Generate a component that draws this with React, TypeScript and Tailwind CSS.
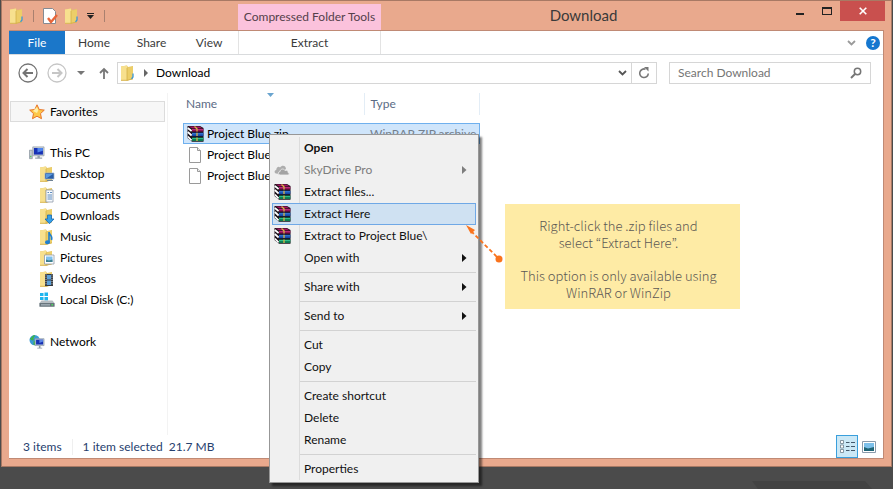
import type { ReactNode } from 'react';

const links = [
  { label: 'Desktop', icon: 'desktop' },
  { label: 'Documents', icon: 'documents' },
  { label: 'Downloads', icon: 'downloads' },
  { label: 'Music', icon: 'music' },
  { label: 'Pictures', icon: 'pictures' },
  { label: 'Videos', icon: 'videos' },
];

type MenuEntry = {
  label: string;
  icon?: ReactNode;
  arrow?: boolean;
  bold?: boolean;
  disabled?: boolean;
  active?: boolean;
};

const menuGroups: MenuEntry[][] = [
  [
    { label: 'Open', bold: true },
    { label: 'SkyDrive Pro', icon: <CloudIcon />, arrow: true, disabled: true },
    { label: 'Extract files...', icon: <BooksIcon /> },
    { label: 'Extract Here', icon: <BooksIcon />, active: true },
    { label: 'Extract to Project Blue\\', icon: <BooksIcon /> },
    { label: 'Open with', arrow: true },
  ],
  [{ label: 'Share with', arrow: true }],
  [{ label: 'Send to', arrow: true }],
  [{ label: 'Cut' }, { label: 'Copy' }],
  [{ label: 'Create shortcut' }, { label: 'Delete' }, { label: 'Rename' }],
  [{ label: 'Properties' }],
];

/* Icons */
function FolderIcon({ kind }: { kind?: string }) {
  return (
    <svg width="16" height="16" viewBox="0 0 16 16" className="shrink-0">
      <path d="M1 1.500L7 .5l1 1.500 5-1V14l-5 1.500H1z" fill="#e5c566" />
      <path d="M1 1.500L7 .5V15.500H1z" fill="#f7e08e" />
      <path d="M7 3l6-1.500V14l-6 1.500z" fill="#ecce68" />
      <path d="M7 3v12.500M1 15.300h6l6-1.500" stroke="#cfa942" strokeWidth="0.7" fill="none" />
      {!kind && <path d="M13 8.500V12l-1.500 1.800" stroke="#3b97d8" strokeWidth="1.300" fill="none" />}
      {kind === 'desktop' && (
        <>
          <path d="M6 7h9v6H6z" fill="#2a5ea8" stroke="#9fb6cf" strokeWidth="0.7" />
          <path d="M7 8h7L8 12H7z" fill="#5b9be0" />
          <path d="M8 14.500h6" stroke="#6f8294" />
        </>
      )}
      {kind === 'documents' && (
        <>
          <path d="M7 3h7v12H7z" fill="#f7fafd" stroke="#8f9ba8" strokeWidth="0.8" />
          <path d="M8.500 5.500h1.500M8.500 8h4.500M8.500 10h4.500M8.500 12h4.500M11 5.500h2" stroke="#4d7fb8" strokeWidth="0.9" />
        </>
      )}
      {kind === 'downloads' && <path d="M8.500 7h4v4h2.500L10.500 15.700 6 11h2.500z" fill="#35a0e8" stroke="#1a68b0" strokeWidth="0.8" />}
      {kind === 'music' && (
        <>
          <path d="M10 3v10M10 3c0 3 4 3 2.500 8" stroke="#1f7fd0" strokeWidth="1.600" fill="none" />
          <ellipse cx="8.500" cy="13.300" rx="2.500" ry="2" fill="#1f7fd0" />
        </>
      )}
      {kind === 'pictures' && (
        <>
          <path d="M5.500 5h9.500v9H5.500z" fill="#fff" stroke="#8f9ba8" strokeWidth="0.8" />
          <path d="M7 6.500h6.500V12H7z" fill="#7fc0ec" />
          <path d="M7 12V9.500l3 1 3.500-1V12z" fill="#3b7f8f" />
        </>
      )}
      {kind === 'videos' && (
        <>
          <path d="M6 3h8v12H6z" fill="#34383f" />
          <path d="M8 4h4v4.500H8zM8 9.500h4V14H8z" fill="#5a9fd8" />
          <path d="M7 3.500v11M13 3.500v11" stroke="#dfe5ea" strokeWidth="0.9" strokeDasharray="1 1.200" />
        </>
      )}
    </svg>
  );
}

function BooksIcon() {
  return (
    <svg width="17" height="16" viewBox="0 0 17 16" className="shrink-0">
      <path d="M1 0h12l3.500 2v13.800H5L.5 12V.5z" fill="#1a1018" />
      <path d="M1.500.5h11l3 1.800H5z" fill="#a81462" />
      <path d="M5 2.800h11.300V5.500H5z" fill="#8a0f50" />
      <path d="M5 3.300h11.300v.8H5z" fill="#cc3a86" />
      <path d="M5 6.700h11.300v3.500H5z" fill="#1448a8" />
      <path d="M5 7.300h11.300v1H5z" fill="#3d86dc" />
      <path d="M5 11.500h11.300v3.500H5z" fill="#0a7a50" />
      <path d="M5 12.100h11.300v1H5z" fill="#33c48e" />
      <path d="M.8 2L4.600 5M.8 6l3.800 3.500M.8 10.500l3.800 3.800" stroke="#fff" strokeWidth="1.700" />
      <path d="M7.500.6l2.500 2.200v2.700M10 6.800v3.300M10 11.600v3.300" stroke="#d9b545" strokeWidth="1.300" fill="none" />
    </svg>
  );
}

function CloudIcon() {
  return (
    <svg width="16" height="12" viewBox="0 0 16 12">
      <path d="M2 9.500C0 9 .3 6 2.200 6 2.500 2.800 5 2 6 3.500 8 .5 12 1.500 12 5L5 10z" fill="#adadad" />
      <path d="M6 11c-2.500-.3-2-3.500 0-3.300C6 5 9.500 4 11 6.500c2-1 3.300.5 3 2 1.800.3 1.500 2.500 0 2.500z" fill="#a3a3a3" stroke="#f0f0f0" strokeWidth="0.8" />
    </svg>
  );
}

function FileIcon() {
  return (
    <svg width="16" height="16" viewBox="0 0 16 16" className="shrink-0">
      <path d="M2.500.5h8l3 3v12h-11z" fill="#fff" stroke="#9a9a9a" />
      <path d="M10.500.5v3h3" fill="#eee" stroke="#9a9a9a" />
    </svg>
  );
}

function StarIcon() {
  return (
    <svg width="16" height="16" viewBox="0 0 16 16">
      <path d="M8 .8l2.200 4.700 5.100.6-3.800 3.500 1 5.100L8 12.200l-4.500 2.500 1-5.100L.7 6.100l5.100-.6z" fill="#fcc84a" stroke="#e8742a" strokeWidth="1" strokeLinejoin="round" />
      <path d="M8 3l1.300 3.300L8 9 4 7z" fill="#fff0a8" />
    </svg>
  );
}

function ComputerIcon() {
  return (
    <svg width="17" height="16" viewBox="0 0 17 16">
      <path d="M.5 5h3v9h-3z" fill="#c3cbd2" stroke="#7f8a94" strokeWidth="0.7" />
      <path d="M1.300 11h1.200v1.500H1.300z" fill="#45c845" />
      <path d="M4 1.500h12V11H4z" fill="#cdd4da" stroke="#8c979f" strokeWidth="0.7" />
      <path d="M5.200 2.700h9.600v7H5.200z" fill="#1731b4" />
      <path d="M9 2.700h5.800v3L9 7.500z" fill="#4f86ee" />
      <path d="M9 11h2.500v1.800H14V14H6.500v-1.200H9z" fill="#97a3ad" />
    </svg>
  );
}

function DiskIcon() {
  return (
    <svg width="16" height="16" viewBox="0 0 16 16">
      <path d="M1 1h3.500v3H1zM5.500.5H9V4H5.500zM1 5h3.500v3H1zM5.500 5H9v3.500H5.500z" fill="#1fb5ee" />
      <path d="M2.500 8.500h11L15.500 11v3.500H.5V11z" fill="#b5bcc1" />
      <path d="M.5 11h15v3.700H.5z" fill="#68747c" />
      <path d="M2 12h9v1.600H2z" fill="#99a5ad" />
      <path d="M12.500 12h1.500v1.500h-1.500z" fill="#4ae05a" />
    </svg>
  );
}

function NetworkIcon() {
  return (
    <svg width="17" height="16" viewBox="0 0 17 16">
      <circle cx="6" cy="6" r="5.500" fill="#3a9ad6" />
      <path d="M1 4c3-1 2-3 5-3.500C7 2.500 4 3 5 5S2 7 1 4zM5 7l3 1-2 3.500C4 11 5 9 5 7z" fill="#3cb44a" />
      <path d="M6.500 4.500H16v7.300H6.500z" fill="#c9d2da" stroke="#8796a3" strokeWidth="0.7" />
      <path d="M7.500 5.500H15v5.200H7.500z" fill="#1731b4" />
      <path d="M11 5.500h4v2l-4 1.500z" fill="#5c86e6" />
      <path d="M10.500 12h1.700v2H14v1H8.700v-1h1.800z" fill="#8e9aa5" />
    </svg>
  );
}

function TreeItem({ icon, label, nested }: { icon: ReactNode; label: string; nested?: boolean }) {
  return (
    <li>
      <a href="#" className={`flex items-center gap-[5px] h-[21px] ${nested ? 'pl-[30px]' : 'pl-5'}`}>
        <span className="w-4 flex justify-center">{icon}</span>
        {label}
      </a>
    </li>
  );
}

function ContextMenu() {
  return (
    <div role="menu" className="absolute left-[269px] top-[134px] w-[210px] border border-[#979797] bg-[#f0f0f0] p-[2px] shadow-[3px_3px_2px_rgba(0,0,0,0.5)]">
      <div className="bg-[linear-gradient(90deg,transparent_27px,#dcdcdc_27px,#dcdcdc_28px,transparent_28px)]">
        {menuGroups.map((group, i) => (
          <div key={i}>
            {i > 0 && <div className="ml-7 h-[7px] flex items-center"><hr className="w-full border-[#d2d2d2]" /></div>}
            {group.map((item) => (
              <button
                key={item.label}
                role="menuitem"
                disabled={item.disabled}
                className={`flex items-center w-full h-[22px] border text-left ${item.active ? 'border-[#6fa8e6] bg-[#cfe1f2]' : 'border-transparent'} ${item.disabled ? 'text-[#7d7d7d]' : 'text-[#111]'} ${item.bold ? 'font-bold' : ''}`}
              >
                <span className="w-[31px] pl-px shrink-0">{item.icon}</span>
                <span className="flex-1">{item.label}</span>
                {item.arrow && (
                  <svg width="5" height="8" viewBox="0 0 5 8" className="mr-2">
                    <path d="M0 0l4.500 4L0 8z" fill="currentColor" />
                  </svg>
                )}
              </button>
            ))}
          </div>
        ))}
      </div>
    </div>
  );
}

export default function App() {
  return (
    <div className="relative min-h-screen flex flex-col overflow-hidden bg-[#4b4b4b] pl-px pr-px text-xs text-black font-['Lato','Open_Sans',sans-serif]">
      <div className="h-[467px] flex flex-col border border-[#a87964] bg-[#e9a98d] px-[7px] pb-[7px]">
        {/* Title bar */}
        <header className="h-[29px] -mr-px flex items-stretch text-[#3a3a3a]">
          <div className="w-[229px] flex items-center gap-2">
            <FolderIcon />
            <span className="w-px h-3 bg-[#a9806f]" />
            <button aria-label="Properties" className="ml-px">
              <svg width="15" height="16" viewBox="0 0 15 16">
                <path d="M.5.5h9l3 3v12H.5z" fill="#fff" stroke="#848b93" />
                <path d="M5 10l3 4 6-7" fill="none" stroke="#e8663a" strokeWidth="2.400" />
              </svg>
            </button>
            <button aria-label="New folder" className="-ml-[2px]"><FolderIcon /></button>
            <button aria-label="Customize toolbar" className="-ml-px">
              <svg width="7" height="6" viewBox="0 0 7 6"><path d="M0 0h7v1H0zM0 2h7L3.500 6z" fill="#222" /></svg>
            </button>
            <span className="w-px h-3 ml-[2px] bg-[#a9806f]" />
          </div>
          <div className="w-[143px] mt-[3px] flex items-center justify-center bg-[#fbc2dc] text-[#54404a]">Compressed Folder Tools</div>
          <h1 className="flex-1 text-center text-[15px] leading-[29px]">Download</h1>
          <div className="flex items-start">
            <button aria-label="Minimize" className="w-[27px] h-5 flex justify-center pt-3"><span className="w-2 h-[2px] bg-[#222]" /></button>
            <button aria-label="Maximize" className="w-[27px] h-5 flex justify-center pt-[6px]"><span className="w-[10px] h-2 border border-t-2 border-[#222]" /></button>
            <button aria-label="Close" className="w-[45px] h-5 flex items-center justify-center bg-[#c9504e]">
              <svg width="8" height="8" viewBox="0 0 8 8"><path d="M.7.7l6.600 6.600M7.300.7L.7 7.300" stroke="#fff" strokeWidth="1.600" /></svg>
            </button>
          </div>
        </header>

        <div className="flex-1 flex flex-col bg-white border-t border-r border-b border-[#c08a75]">
          {/* Ribbon tabs */}
          <nav className="h-6 flex items-center border-b border-[#d9dbdd] text-[#3b3b3b]">
            <button className="w-14 h-full bg-[#1b77c9] text-white">File</button>
            <button className="w-[58px] h-full">Home</button>
            <button className="w-[57px] h-full">Share</button>
            <button className="w-[58px] h-full">View</button>
            <button className="w-[143px] h-full border-x border-[#e3e3e3]">Extract</button>
            <button aria-label="Minimize the ribbon" className="ml-auto">
              <svg width="9" height="6" viewBox="0 0 9 6"><path d="M1 1l3.500 3.500L8 1" fill="none" stroke="#9a9a9a" strokeWidth="1.800" /></svg>
            </button>
            <button aria-label="Help" className="ml-[10px] mr-[3px] size-[14px] rounded-full bg-[#1577cf] text-white font-bold leading-[14px]">?</button>
          </nav>

          {/* Address bar */}
          <div className="flex items-center pt-[7px] pl-[9px] pr-3 text-[#333]">
            <button aria-label="Back">
              <svg width="20" height="20" viewBox="0 0 20 20" fill="none" stroke="#747474">
                <circle cx="10" cy="10" r="9" strokeWidth="1.300" />
                <path d="M15 10H6M9.500 6l-4 4 4 4" strokeWidth="2" />
              </svg>
            </button>
            <button aria-label="Forward" className="ml-[9px]">
              <svg width="20" height="20" viewBox="0 0 20 20" fill="none" stroke="#c6c6c6">
                <circle cx="10" cy="10" r="9" strokeWidth="1.300" />
                <path d="M5 10h9M10.500 6l4 4-4 4" strokeWidth="2" />
              </svg>
            </button>
            <button aria-label="Recent locations" className="ml-[10px]">
              <svg width="8" height="4" viewBox="0 0 8 4"><path d="M0 0h8L4 4z" fill="#777" /></svg>
            </button>
            <button aria-label="Up" className="ml-[14px]">
              <svg width="10" height="12" viewBox="0 0 10 12"><path d="M5 12V2M1 6l4-4 4 4" fill="none" stroke="#777" strokeWidth="1.800" /></svg>
            </button>
            <div className="ml-2 flex-1 h-[22px] flex items-center border border-[#d6d6d6] pl-[2px] text-black">
              <FolderIcon />
              <svg width="4" height="8" viewBox="0 0 4 8" className="mx-2"><path d="M0 0l4 4-4 4z" fill="#666" /></svg>
              Download
              <button aria-label="Previous locations" className="ml-auto mr-1">
                <svg width="9" height="6" viewBox="0 0 9 6"><path d="M1 1l3.500 3.500L8 1" fill="none" stroke="#555" strokeWidth="1.800" /></svg>
              </button>
              <button aria-label="Refresh" className="w-[25px] h-full flex items-center justify-center border-l border-[#d6d6d6]">
                <svg width="12" height="12" viewBox="0 0 12 12">
                  <path d="M7.500 2.200A4.300 4.300 0 1 0 10.300 6.500" fill="none" stroke="#777" strokeWidth="1.600" />
                  <path d="M6 0h4.500v4.500z" fill="#777" />
                </svg>
              </button>
            </div>
            <label className="ml-3 w-[202px] h-[22px] flex items-center border border-[#d6d6d6] px-2">
              <input aria-label="Search Download" placeholder="Search Download" className="flex-1 min-w-0 outline-none placeholder:text-[#757575]" />
              <svg width="12" height="12" viewBox="0 0 12 12" fill="none" stroke="#757575">
                <circle cx="7.500" cy="4.500" r="3.200" strokeWidth="1.500" />
                <path d="M5 7L1 11" strokeWidth="2" />
              </svg>
            </label>
          </div>

          <div className="flex-1 flex pt-[9px]">
            {/* Navigation pane */}
            <aside className="w-[159px] pt-2 border-r border-[#f3f3f3]">
              <a href="#" className="ml-px mr-[2px] h-[21px] flex items-center gap-[5px] pl-[18px] border border-[#dcdcdc] bg-[#f7f7f7]">
                <StarIcon />
                Favorites
              </a>
              <ul className="mt-5">
                <TreeItem icon={<ComputerIcon />} label="This PC" />
                {links.map((link) => (
                  <TreeItem key={link.label} icon={<FolderIcon kind={link.icon} />} label={link.label} nested />
                ))}
                <TreeItem icon={<DiskIcon />} label="Local Disk (C:)" nested />
              </ul>
              <ul className="mt-[21px]">
                <TreeItem icon={<NetworkIcon />} label="Network" />
              </ul>
            </aside>

            {/* File list */}
            <main className="flex-1 pl-[15px]">
              <table className="w-[297px] table-fixed text-left">
                <thead>
                  <tr className="h-[22px] text-[#5b6b85]">
                    <th className="w-[181px] pl-[3px] font-normal border-r border-[#e3edf6]">
                      <div className="relative">
                        Name
                        <svg width="7" height="4" viewBox="0 0 7 4" className="absolute left-[81px] -top-[3px]"><path d="M0 0h7L3.500 4z" fill="#6aa5cf" /></svg>
                      </div>
                    </th>
                    <th className="pl-[6px] font-normal border-r border-[#e3edf6]">Type</th>
                  </tr>
                  <tr className="h-2"><td colSpan={2} /></tr>
                </thead>
                <tbody>
                  <tr className="h-[21px] bg-[#cfe5fb] outline outline-1 -outline-offset-1 outline-[#6fb0ee]">
                    <td className="pl-1"><div className="flex items-center gap-[3px] whitespace-nowrap"><BooksIcon />Project Blue.zip</div></td>
                    <td className="pl-[6px] text-[#75808c] whitespace-nowrap">WinRAR ZIP archive</td>
                  </tr>
                  <tr className="h-[21px]"><td className="pl-1" colSpan={2}><div className="flex items-center gap-1"><FileIcon />Project Blue</div></td></tr>
                  <tr className="h-[21px]"><td className="pl-1" colSpan={2}><div className="flex items-center gap-1"><FileIcon />Project Blue</div></td></tr>
                </tbody>
              </table>
            </main>
          </div>

          {/* Status bar */}
          <footer className="h-[23px] flex items-center pl-[14px] pr-[7px] text-[#26406e]">
            <span className="pr-[10px] border-r border-[#efefef]">3 items</span>
            <span className="pl-[10px] pr-[6px]">1 item selected</span>
            <span>21.7 MB</span>
            <button aria-label="Details view" className="ml-auto w-[22px] h-[23px] flex items-center justify-center border border-[#3a9fdc] bg-[#cbe8f6]">
              <svg width="15" height="13" viewBox="0 0 15 13">
                <path d="M.5.5h3v3h-3zM.5 5h3v3h-3zM.5 9.500h3v3h-3z" fill="#fff" stroke="#6f7f8c" strokeWidth="0.8" />
                <path d="M6 2.500h3.500M11 2.500h4M6 6.500h3.500M11 6.500h4M6 10.500h3.500M11 10.500h4" stroke="#44596b" />
              </svg>
            </button>
            <button aria-label="Thumbnail view" className="ml-1">
              <svg width="14" height="12" viewBox="0 0 14 12">
                <path d="M.5.5h13v11H.5z" fill="#fff" stroke="#8a9bab" />
                <path d="M2 2h10v8H2z" fill="#7cc0ea" />
                <path d="M2 10V6l4 1.500L12 6v4z" fill="#1f6475" />
              </svg>
            </button>
          </footer>
        </div>
      </div>
      <svg width="120" height="8" viewBox="0 0 120 8" className="mt-auto self-end mr-5">
        <path d="M0 0h113l7 8H6z" fill="#434343" />
      </svg>

      <ContextMenu />

      {/* Hint note with its pointer */}
      <svg width="38" height="40" viewBox="0 0 38 40" className="absolute left-[466px] top-[225px]">
        <path d="M0 0l9 5-4 4z" fill="#f9731d" />
        <path d="M5 6l28 28" stroke="#f9731d" strokeWidth="1.800" strokeDasharray="4 2.500" />
        <circle cx="33" cy="34" r="3.500" fill="#f9731d" />
      </svg>
      <aside className="absolute left-[505px] top-[204px] w-[235px] h-[105px] bg-[#feeba5] pt-[13px] pr-2 text-center text-[13px] leading-[17px] text-[#5c5854] font-light font-['Noto_Sans_CJK_KR',sans-serif]">
        <p>Right-click the .zip files and<br />select “Extract Here”.</p>
        <p className="mt-4">This option is only available using<br />WinRAR or WinZip</p>
      </aside>
    </div>
  );
}
